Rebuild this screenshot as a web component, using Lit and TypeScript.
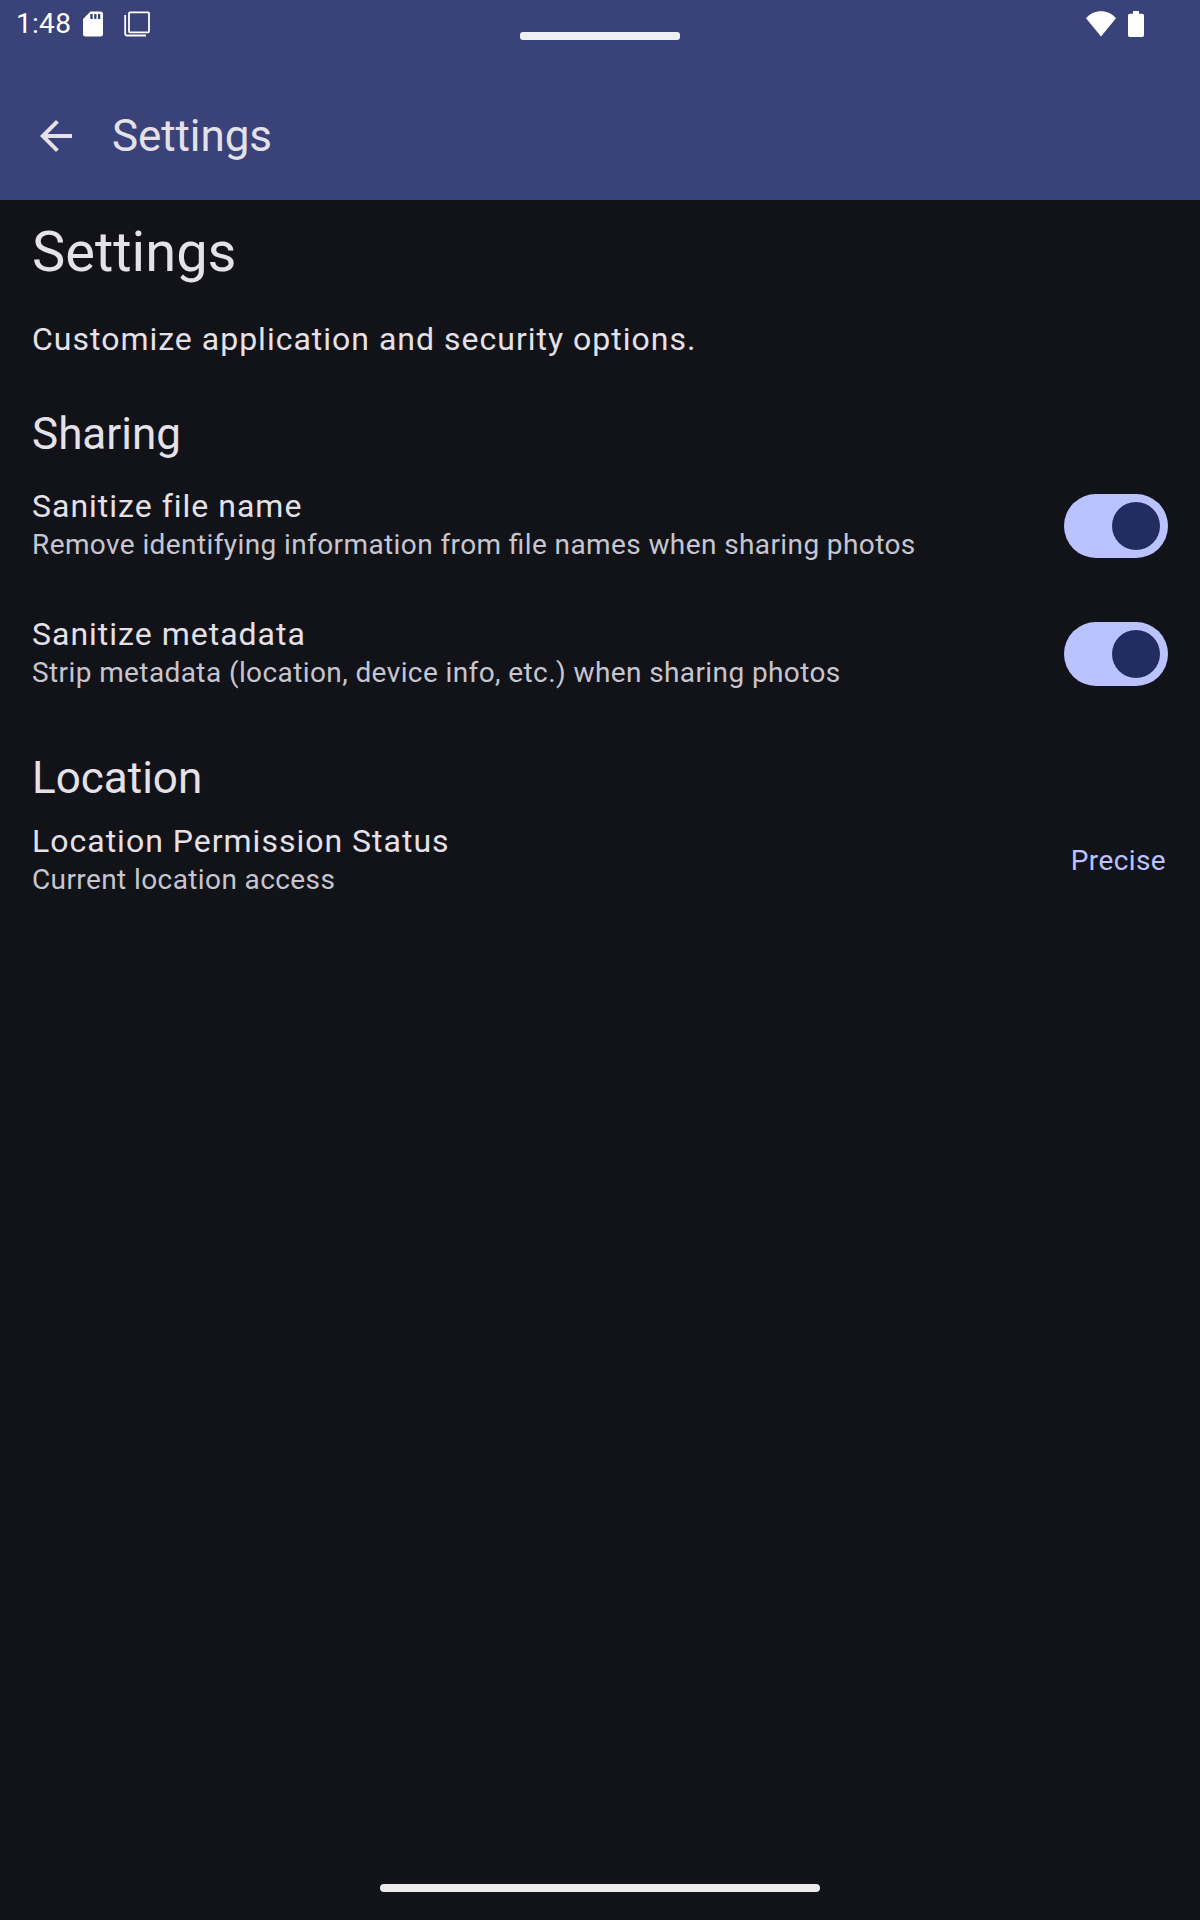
import { LitElement, html, css } from "lit";
import { customElement, property } from "lit/decorators.js";

@customElement("status-bar")
class StatusBar extends LitElement {
  static styles = css`
    :host {
      display: block;
      position: relative;
      height: 72px;
      color: #fff;
    }
    .row {
      display: flex;
      align-items: center;
      justify-content: space-between;
      height: 48px;
      padding: 0 56px 0 16px;
    }
    .group {
      display: flex;
      align-items: center;
    }
    .time {
      font-size: 28px;
      line-height: 48px;
      letter-spacing: 0.3px;
      width: 67px;
    }
    .icon {
      display: block;
    }
    .overlay {
      margin-left: 21px;
    }
    .battery {
      margin-left: 12px;
    }
    .caption-handle {
      position: absolute;
      left: 520px;
      top: 32px;
      width: 160px;
      height: 8px;
      border-radius: 3px;
      background: #eef1f2;
    }
  `;
  render() {
    return html`
      <div class="row">
        <div class="group">
          <span class="time">1:48</span>
          <svg class="icon" width="20" height="48" viewBox="0 0 20 48" fill="currentColor">
            <path fill-rule="evenodd" d="M7.5 11.5H17.5A2.5 2.5 0 0 1 20 14V34A2.5 2.5 0 0 1 17.500 36.500H2.500A2.500 2.500 0 0 1 0 34V19ZM7.300 14V19H9.700V14ZM11.200 14V19H13.500V14ZM15 14V19H17.300V14Z" />
          </svg>
          <svg class="icon overlay" width="26" height="48" viewBox="0 0 26 48" fill="none" stroke="currentColor" stroke-width="1.800">
            <rect x="5" y="12.300" width="20" height="20" rx="1" />
            <path d="M1.200 15V34Q1.200 35.500 2.700 35.500H22" />
          </svg>
        </div>
        <div class="group">
          <svg class="icon" width="30" height="48" viewBox="0 0 30 48" fill="currentColor">
            <path d="M15 36.500L0 18.300C3.800 13.800 9.200 11.300 15 11.300S26.200 13.800 30 18.300Z" />
          </svg>
          <svg class="icon battery" width="16" height="48" viewBox="0 0 16 48" fill="currentColor">
            <path d="M5 11H11V13.700H14.300Q16 13.700 16 15.400V35.200Q16 37 14.300 37H1.700Q0 37 0 35.200V15.400Q0 13.700 1.700 13.700H5Z" />
          </svg>
        </div>
      </div>
      <div class="caption-handle"></div>
    `;
  }
}

@customElement("toggle-switch")
class ToggleSwitch extends LitElement {
  static styles = css`
    :host {
      display: block;
      flex: none;
    }
    .track {
      display: flex;
      justify-content: flex-end;
      box-sizing: border-box;
      width: 104px;
      height: 64px;
      padding: 8px;
      border-radius: 32px;
      background: #bac3ff;
    }
    .thumb {
      width: 48px;
      height: 48px;
      border-radius: 50%;
      background: #222c61;
    }
  `;
  render() {
    return html`<div class="track" role="switch" aria-checked="true"><div class="thumb"></div></div>`;
  }
}

@customElement("setting-row")
class SettingRow extends LitElement {
  @property() label = "";
  @property() description = "";
  static styles = css`
    :host {
      display: flex;
      align-items: center;
      justify-content: space-between;
      height: 80px;
    }
    .text {
      padding-bottom: 2px;
    }
    .label {
      font-size: 32px;
      line-height: 40px;
      letter-spacing: 1px;
      color: #e4e1e9;
    }
    .description {
      font-size: 28px;
      line-height: 38px;
      letter-spacing: 0.4px;
      font-feature-settings: "liga" 1;
      color: #c6c5d0;
    }
  `;
  render() {
    return html`
      <div class="text">
        <div class="label">${this.label}</div>
        <div class="description">${this.description}</div>
      </div>
      <slot></slot>
    `;
  }
}

@customElement("app-root")
class AppRoot extends LitElement {
  static styles = css`
    :host {
      display: flex;
      flex-direction: column;
      height: 1920px;
      background: #121318;
      color: #e4e1e9;
      font-family: Roboto, sans-serif;
    }
    .top {
      background: #394379;
    }
    .app-bar {
      display: flex;
      align-items: center;
      gap: 32px;
      height: 128px;
      padding: 0 32px;
      font-size: 44px;
      line-height: 56px;
      letter-spacing: -0.1px;
    }
    .content {
      flex: 1;
      padding: 16px 32px 0;
    }
    .headline {
      margin: 0;
      font-size: 56px;
      line-height: 72px;
      font-weight: 400;
    }
    .intro {
      margin: 27px 0 43px;
      font-size: 32px;
      line-height: 48px;
      letter-spacing: 1px;
    }
    .section {
      margin: 0;
      font-size: 44px;
      line-height: 56px;
      font-weight: 400;
    }
    .rows {
      display: flex;
      flex-direction: column;
      gap: 48px;
      margin: 24px 0 56px;
    }
    .rows.status {
      margin: 15px 0 0;
    }
    .value {
      margin-right: 2px;
      font-size: 28px;
      line-height: 40px;
      letter-spacing: 0.4px;
      color: #bac3ff;
    }
    .nav {
      display: flex;
      justify-content: center;
      height: 36px;
    }
    .nav-handle {
      width: 440px;
      height: 8px;
      border-radius: 4px;
      background: #ececec;
    }
  `;
  render() {
    return html`
      <header class="top">
        <status-bar></status-bar>
        <div class="app-bar">
          <svg width="48" height="48" viewBox="0 0 24 24" fill="currentColor">
            <path d="M20 11H7.830L13.420 5.410L12 4L4 12L12 20L13.410 18.590L7.830 13H20Z" />
          </svg>
          <span>Settings</span>
        </div>
      </header>
      <main class="content">
        <h1 class="headline">Settings</h1>
        <p class="intro">Customize application and security options.</p>
        <h2 class="section">Sharing</h2>
        <div class="rows">
          <setting-row
            label="Sanitize file name"
            description="Remove identifying information from file names when sharing photos"
            ><toggle-switch></toggle-switch
          ></setting-row>
          <setting-row
            label="Sanitize metadata"
            description="Strip metadata (location, device info, etc.) when sharing photos"
            ><toggle-switch></toggle-switch
          ></setting-row>
        </div>
        <h2 class="section">Location</h2>
        <div class="rows status">
          <setting-row label="Location Permission Status" description="Current location access"
            ><span class="value">Precise</span></setting-row
          >
        </div>
      </main>
      <footer class="nav"><div class="nav-handle"></div></footer>
    `;
  }
}
